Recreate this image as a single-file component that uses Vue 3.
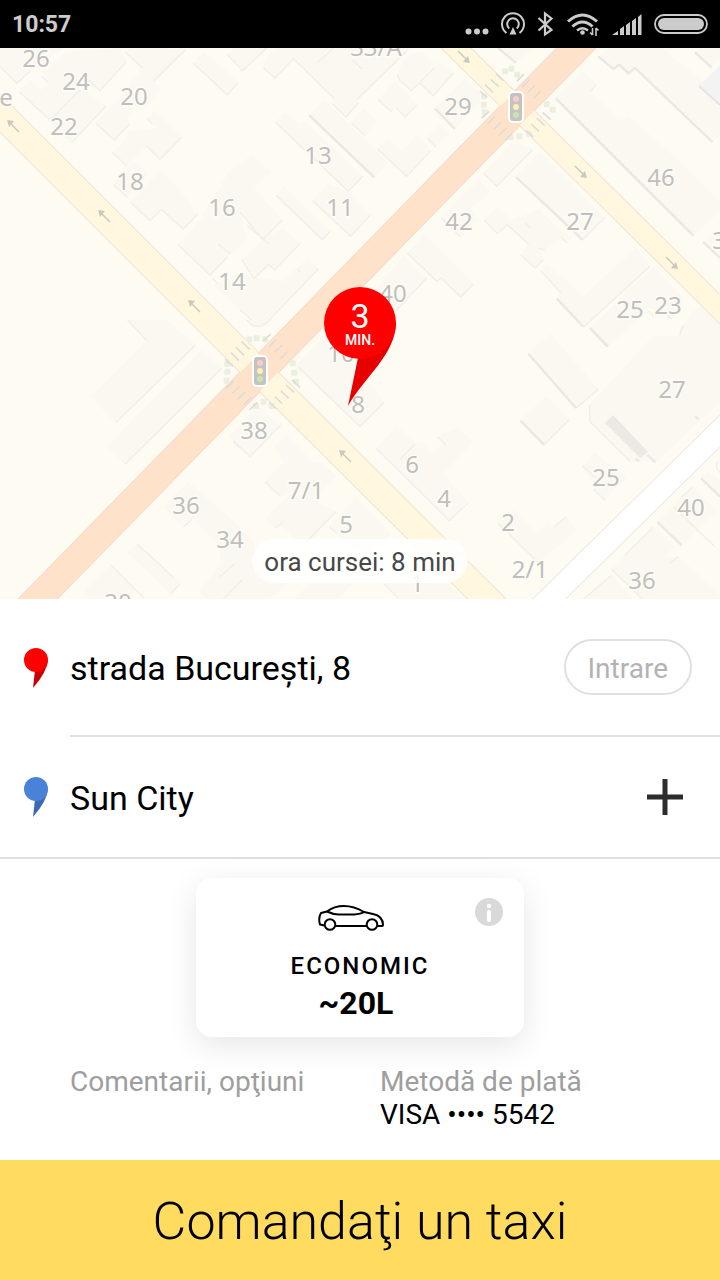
<script setup>
const tiles = [
  {
    x: 0, y: 0, w: 240, h: 300,
    buildings: [
      '0,195 0,144 190,144 130,185 50,250',
      '130,215 200,155 360,144 380,180 300,272 230,245 190,270 145,248',
      '58,272 90,242 125,270 230,170 260,240 155,360',
      '150,355 240,265 318,318 215,428 160,385',
      '375,155 390,144 480,144 428,205',
      '480,144 555,150 460,245 482,270 425,332 405,320 380,350 388,372 343,420 287,370 345,310 400,240',
      '440,355 465,332 545,410 480,478 440,438 380,498 337,457 370,430 385,395 430,390 475,385',
      '340,555 400,480 445,520 382,592',
      '390,605 480,512 538,570 593,642 550,688 485,628 450,662',
      '580,190 612,155 715,245 682,285',
      '680,160 700,144 720,144 720,205',
      '605,650 690,510 758,464 812,516 762,564 848,659 788,719 735,655',
      '535,735 605,655 720,640 740,720 690,762 655,730 683,770 630,825'
    ],
    shades: ['0,200 50,250 90,215', '125,228 145,248', '265,240 300,272 380,185', '58,275 150,360 240,270', '215,428 318,318', '375,155 428,205', '555,150 460,245', '287,370 343,420 388,372', '337,457 380,498', '440,438 480,478 545,412', '440,355 458,373', '340,553 382,592', '390,605 450,662 485,628 550,688 593,642', '580,190 682,285 714,248', '680,162 720,203', '535,735 630,825 683,770', '655,732 690,762', '637,835 692,890']
  },
  {
    x: 240, y: 48, w: 240, h: 300,
    buildings: [
      '0,0 80,0 8,68 0,65',
      '75,35 110,0 270,0 232,45 158,35 105,90 70,60',
      '158,30 232,45 280,0 510,0 350,155 355,165 318,207 280,168 283,150',
      '472,80 490,40 510,20 545,10 582,45 515,128 480,95',
      '540,105 595,45 640,75 580,143',
      '415,155 465,98 505,140 530,170 495,207 468,178 455,192',
      '585,180 675,92 720,130 720,160 645,243',
      '562,270 600,228 630,255 587,297',
      '334,223 370,180 413,222 375,263',
      '412,302 445,272 485,308 530,260 572,305 500,385',
      '208,200 252,155 445,345 403,388',
      '106,222 135,195 180,230 195,220 368,385 325,430',
      '108,442 130,415 270,550 248,575',
      '218,458 265,405 320,430 392,500 332,565',
      '5,635 70,575 130,540 182,585 105,665 85,650 42,692',
      '0,680 130,700 205,628 235,662 75,830 50,830 -80,710',
      '603,510 660,450 720,395 720,460 690,480 712,515 662,567',
      '502,615 552,560 700,708 662,747 603,690 590,700',
      '370,770 490,625 560,690 430,830'
    ],
    shades: ['0,65 8,68 80,0', '70,60 105,90 158,35', '158,30 283,152', '278,168 318,207 355,165', '280,0 232,45', '337,35 366,63', '500,10 350,155', '472,80 480,98 515,128 582,60', '540,105 580,143 640,75', '415,155 455,192', '468,178 495,207 530,172', '562,270 587,297', '334,225 375,263', '412,302 500,385 572,308', '106,222 325,430 368,385', '108,442 248,575 270,550', '218,458 332,565 392,500', '0,492 68,575 128,515', '22,533 88,588', '5,635 42,692 85,650 105,665 182,585', '0,785 50,830 75,830 235,662', '172,663 182,672', '603,510 662,567', '502,615 590,700 603,690 662,747 700,708', '560,690 430,830'],
    deep: ['585,182 645,243', '208,202 403,388']
  },
  {
    x: 480, y: 48, w: 240, h: 300,
    buildings: [
      '55,0 160,0 108,45',
      '355,25 385,0 545,0 720,140 720,260 695,283 465,60 445,78 418,50 400,65',
      '645,15 660,0 720,0 720,35 695,60',
      '228,150 310,70 348,110 332,130 420,220 445,205 615,355 720,460 720,490 640,563',
      '670,582 720,540 720,630',
      '10,375 100,280 158,300 50,415',
      '108,385 180,315 375,508 307,577',
      '12,515 55,475 95,515 180,485 212,520 275,570 262,585 243,568 195,608 178,600 190,635 165,660 122,620 145,588 82,530 52,557',
      '230,752 240,735 182,668 200,650 272,710 310,745 468,600 510,655 310,838',
      '330,840 522,655 610,755 575,815 510,780 385,897',
      '0,395 30,430 0,460'
    ],
    shades: ['10,375 50,415 158,305', '12,515 52,557 82,530 146,588', '135,525 152,541', '122,620 165,660 190,635', '175,600 196,607', '243,568 262,585', '182,668 243,735', '510,655 310,838', '505,790 522,806', '560,800 575,813', '348,110 332,130', '375,508 307,577', '605,835 600,860'],
    deep: ['55,0 108,45', '355,25 400,63 418,50 445,76 465,60 697,282', '645,13 695,59', '228,152 640,563', '670,582 720,630', '108,387 307,575', '230,752 310,836', '330,840 383,895']
  },
  {
    x: 0, y: 320, w: 240, h: 280,
    buildings: [
      '383,0 500,0 587,75 347,308 273,230 440,62',
      '320,380 605,90 665,145 375,433',
      '490,562 565,485 720,620 720,740 580,598 550,622',
      '380,695 412,672 540,790 512,822',
      '255,810 333,735 405,805 390,840 270,840',
      '600,815 670,718 720,740 720,840 620,840'
    ],
    shades: ['587,75 347,308', '665,145 375,433', '383,0 440,62', '550,622 577,597', '412,672 520,772', '333,735 432,835', '700,365 720,385', '512,822 540,792']
  },
  {
    x: 220, y: 320, w: 260, h: 280,
    buildings: [
      '225,140 330,30 492,248 420,320',
      '28,350 110,255 182,315 90,410',
      '135,485 195,425 162,380 200,345 285,430 310,430 348,470 270,540 240,510 180,530',
      '135,595 210,520 260,530 350,575 245,680 190,620 165,625',
      '328,620 410,532 512,640 460,700 400,690',
      '468,385 530,318 585,370 600,365 640,400 675,370 655,350 680,335 715,322 758,368 670,460 745,548 688,602',
      '0,570 100,660 130,780 200,790 150,840 0,840',
      '490,790 680,790 745,840 540,840',
      '220,840 270,790 400,790 350,840',
      '80,0 160,0 125,18 100,18'
    ],
    shades: ['235,140 420,320 492,248', '40,362 90,410 182,315', '135,485 180,528', '165,625 190,607', '348,575 245,680', '328,620 350,640', '468,385 688,602 745,548', '540,418 585,372', '652,350 677,374', '80,0 100,18 125,18 150,0', '490,790 540,840', '0,770 45,730', '10,838 65,780']
  },
  {
    x: 460, y: 320, w: 260, h: 280,
    buildings: [
      '205,100 272,42 415,208 348,265',
      '180,302 260,228 327,300 252,375',
      '388,255 580,48 660,48 670,15 700,-30 780,-60 780,245 590,425 512,425 390,305',
      '367,437 405,398 440,430 500,470 432,542',
      '115,610 160,570 230,640 265,608 282,622 318,590 353,630 235,728',
      '592,605 700,500 770,575 710,630 665,677',
      '722,475 740,455 780,480 780,530',
      '455,748 580,622 640,680 615,710 655,710 780,825 780,840 550,840',
      '370,840 455,765 520,840',
      '0,330 38,365 0,405',
      '0,520 25,548 5,565'
    ],
    shades: ['388,255 390,305 512,425', '367,437 408,475', '400,507 435,541', '115,610 235,728', '282,622 318,590', '348,265 415,208', '252,375 327,300', '640,560 765,680', '455,748 550,840', '580,622 495,705', '630,730 655,710', '370,838 455,765', '670,15 660,45', '665,530 697,502', '770,425 770,445 780,458', '350,2 370,20'],
    deep: ['205,101 348,264', '181,302 252,374', '390,24 443,80', '592,606 665,676', '723,475 780,530', '562,405 587,427', '527,415 538,425', '706,289 716,298']
  }
]

const labels = [
  ['26', 36, 59], ['24', 76, 82], ['20', 134, 97], ['22', 64, 127], ['e', 6, 98],
  ['18', 130, 182], ['16', 222, 208], ['14', 232, 282], ['13', 318, 156], ['11', 340, 208],
  ['33/A', 376, 48], ['29', 458, 107], ['42', 459, 222], ['40', 393, 294], ['10', 341, 354],
  ['8', 358, 405], ['46', 661, 178], ['27', 580, 222], ['25', 630, 310], ['23', 668, 306],
  ['3', 719, 241], ['27', 672, 390], ['25', 606, 478], ['40', 691, 508], ['36', 642, 581],
  ['38', 254, 431], ['36', 186, 506], ['34', 230, 540], ['7/1', 306, 491], ['5', 346, 525],
  ['6', 412, 465], ['4', 444, 499], ['2', 508, 523], ['2/1', 530, 570], ['1', 417, 584],
  ['30', 118, 603]
]

const arrows = [
  [13, 126, 0], [104, 216, 0], [194, 306, 0], [345, 456, 0],
  [464, 57, 180], [581, 172, 180], [672, 263, 180]
]

const crossings = [
  {
    x: 480, y: 48,
    stripes: 'M48 78l22 20M32 94l24 22M15 110l24 23M0 130l22 18M110 100l22-22M126 118l22-22M142 135l22-22M160 152l22-23M22 228l23-22M40 246l22-23M57 262l22-22M75 277l22-22M137 247l23 20M153 228l24 22M170 210l24 23M188 193l24 22M5 210l23-20',
    green: [[75, 70], [94, 62], [112, 80], [200, 168], [218, 185], [92, 268], [118, 265], [147, 258], [12, 145], [12, 170], [14, 192]]
  },
  {
    x: 220, y: 320,
    stripes: 'M65 65l24 24M48 82l24 24M33 98l24 24M15 117l24 22M130 62l22-20M147 80l23-22M163 97l24-22M180 117l23-22M18 205l24-23M35 222l24-24M53 238l24-23M70 255l24-23M88 270l24-23M148 247l22 20M165 230l22 22M182 212l24 23M198 195l24 22M216 180l24 22',
    green: [[88, 58], [110, 55], [135, 58], [218, 130], [223, 158], [228, 185], [22, 132], [22, 155], [20, 182], [108, 258], [130, 245], [155, 258]]
  }
]

const lights = [[516, 107], [260, 371]]
</script>

<template>
  <main class="app">
    <header class="status">
      <time class="clock">10:57</time>
      <svg class="status-icons" viewBox="464 8 246 32" fill="none" stroke="#ccc" aria-hidden="true">
        <g fill="#ccc" stroke="none">
          <circle cx="468.500" cy="31.500" r="3" /><circle cx="477" cy="31.500" r="3" /><circle cx="485.500" cy="31.500" r="3" />
          <path d="M513 27l3.500 7.500h-7z" />
        </g>
        <path d="M506.500 33a11 11 0 1 1 13 0" stroke-width="2" />
        <path d="M509.300 28.500a5.800 5.800 0 1 1 7.400 0" stroke-width="2" />
        <path d="M538.500 18l13 12-6.500 4.500v-21l6.500 5L538.500 30.500" stroke-width="2.200" />
        <g stroke-width="3">
          <path d="M568 21.500q14.500-13 29 0" />
          <path d="M572.500 26.500q10-9 20 0" />
          <path d="M577 30.500q5.500-4.500 11 0" stroke-width="2.500" />
        </g>
        <circle cx="582.500" cy="32.500" r="2.300" fill="#ccc" stroke="none" />
        <path d="M592.500 28v7M590 32.500l2.500 2.500M596 36v-8M596 28l2.500 2.500" stroke-width="1.600" />
        <path d="M612 35h6v-4zM620 35h4v-9l-4 3zM626 35h4V22l-4 3zM632 35h4V18l-4 3zM638 35h3.500V14l-3.500 3z" fill="#ccc" stroke="none" />
        <rect x="655" y="15" width="52" height="18" rx="9" stroke-width="1.800" />
        <rect x="658" y="18" width="46" height="12" rx="6" fill="#ccc" stroke="none" />
      </svg>
    </header>

    <section class="map" aria-label="Hartă">
      <svg class="map-canvas" viewBox="0 48 720 551" preserveAspectRatio="xMidYMid slice">
        <rect x="0" y="0" width="720" height="620" fill="#fefbf3" />
        <svg v-for="(t, i) in tiles" :key="i" class="tile" :x="t.x" :y="t.y" :width="t.w" :height="t.h" :viewBox="`0 0 ${t.w * 3} ${t.h * 3}`">
          <polygon v-for="p in t.buildings" :key="p" :points="p" fill="#fbf8f1" />
          <polyline v-for="p in t.shades" :key="p" :points="p" fill="none" stroke="#f0eee8" stroke-width="4" />
          <polyline v-for="p in t.deep" :key="p" :points="p" fill="none" stroke="#e9e8e2" stroke-width="7" />
        </svg>
        <polygon points="699,86 720,65 720,105" fill="#f3f3f3" />
        <path d="M699 86l21 19" stroke="#e4e4e2" stroke-width="2" />
        <polygon points="605,423 613,415 648,452 640,458" fill="#ebe9e3" />

        <g fill="none">
          <path d="M539 609L730 421" stroke="#ebe9e5" stroke-width="24" />
          <path d="M539 609L730 421" stroke="#fff" stroke-width="22" />
          <path d="M-10 103L260 373L500 612" stroke="#f8e0d0" stroke-width="28" />
          <path d="M446 38L730 319" stroke="#f8e0d0" stroke-width="22" />
          <path d="M28 609L586 38" stroke="#f6dac8" stroke-width="29" />
          <path d="M-10 103L260 373L500 612" stroke="#fff8df" stroke-width="26" />
          <path d="M446 38L730 319" stroke="#fff8df" stroke-width="20" />
          <path d="M28 609L586 38" stroke="#fee3ca" stroke-width="27" />
        </g>

        <svg v-for="c in crossings" :key="c.x" class="tile" :x="c.x" :y="c.y" width="240" height="300" viewBox="0 0 720 900">
          <rect v-for="g in c.green" :key="g.join()" :x="g[0] - 9" :y="g[1] - 9" width="18" height="18" rx="4" fill="#ebefe0" />
          <path :d="c.stripes" stroke="#dedcd8" stroke-width="5" fill="none" />
        </svg>

        <g v-for="a in arrows" :key="a.join()" :transform="`translate(${a[0]} ${a[1]}) rotate(${a[2]})`">
          <path d="M6 6L-3-3" stroke="#cbc9bf" stroke-width="1.500" />
          <path d="M-6-6L1-5L-4 1z" fill="#cbc9bf" />
        </g>

        <g class="numbers">
          <text v-for="(l, i) in labels" :key="i" :x="l[1]" :y="l[2] + 8">{{ l[0] }}</text>
        </g>

        <g v-for="p in lights" :key="p[0]" :transform="`translate(${p[0]} ${p[1]})`">
          <rect x="-7" y="-15" width="14" height="30" rx="4" fill="#c5c3c1" stroke="#fff" stroke-width="2" />
          <circle cy="-8" r="3" fill="#f9cdc8" />
          <circle cy="0" r="3" fill="#fbeeb4" />
          <circle cy="8" r="3" fill="#c6e5b0" />
        </g>
      </svg>

      <div class="pickup">
        <svg class="pickup-shape" viewBox="0 0 72 120" aria-hidden="true">
          <path d="M35 66L24 119C42 88 71 68 72 36z" fill="#e60000" />
          <circle cx="36" cy="36" r="36" fill="#f00" />
        </svg>
        <div class="pickup-text">
          <span class="pickup-value">3</span>
          <span class="pickup-unit">MIN.</span>
        </div>
      </div>
      <div class="ride-time">ora cursei: 8 min</div>
    </section>

    <section class="route">
      <div class="stop first">
        <svg class="stop-pin" viewBox="0 0 24 40" aria-hidden="true">
          <path d="M11 22L9 40Q23 24 24 12z" fill="#c80000" />
          <circle cx="12" cy="12" r="12" fill="#f00" />
        </svg>
        <div class="stop-body lined">
          <span class="address">strada București, 8</span>
          <button class="entrance" type="button">Intrare</button>
        </div>
      </div>
      <div class="stop">
        <svg class="stop-pin" viewBox="0 0 24 40" aria-hidden="true">
          <path d="M11 22L9 40Q23 24 24 12z" fill="#3b6ab0" />
          <circle cx="12" cy="12" r="12" fill="#4a82da" />
        </svg>
        <div class="stop-body">
          <span class="address">Sun City</span>
          <button class="add" type="button" aria-label="Adaugă">
            <svg viewBox="0 0 36 36" aria-hidden="true"><path d="M18 0v36M0 18h36" stroke="#2d2d2d" stroke-width="5" /></svg>
          </button>
        </div>
      </div>
    </section>

    <section class="tariffs">
      <article class="tariff">
        <button class="info" type="button" aria-label="Informații">
          <svg viewBox="0 0 28 28" aria-hidden="true">
            <circle cx="14" cy="14" r="14" fill="#d9d9d9" />
            <circle cx="14" cy="8" r="2.200" fill="#fff" />
            <path d="M14 14v8" stroke="#fff" stroke-width="4" stroke-linecap="round" />
          </svg>
        </button>
        <svg class="car" viewBox="0 0 66 26" fill="none" stroke="#000" stroke-width="2" stroke-linejoin="round" aria-hidden="true">
          <path d="M6.500 20.500L2 19.500Q0 13 3 8L9 6.500Q16 1 26 1Q36 1 46 7L55 9Q65 11 65 20Q65 21 64 21H59.500M17.500 21H48.500" />
          <path d="M9 6.500Q15 9.500 21 9.500H36Q43 9 46 7" />
          <circle cx="12" cy="19.500" r="5.300" /><circle cx="54" cy="19.500" r="5.300" />
        </svg>
        <h2 class="tariff-name">ECONOMIC</h2>
        <p class="price">~20L</p>
      </article>
    </section>

    <section class="options">
      <a class="option" href="#comentarii"><span class="option-label">Comentarii, opţiuni</span></a>
      <a class="option" href="#plata">
        <span class="option-label">Metodă de plată</span>
        <span class="option-value">VISA •••• 5542</span>
      </a>
    </section>

    <button class="order" type="button">Comandaţi un taxi</button>
  </main>
</template>

<style>
body { margin: 0; background: #fff; }
</style>

<style scoped>
.app {
  display: flex;
  flex-direction: column;
  min-height: 100vh;
  background: #fff;
  color: #000;
  font-family: Roboto, "Liberation Sans", sans-serif;
}
.app * { box-sizing: border-box; }
button {
  padding: 0;
  border: 0;
  background: none;
  font: inherit;
  cursor: pointer;
}
.status {
  display: flex;
  align-items: center;
  justify-content: space-between;
  height: 48px;
  padding: 0 10px 0 12px;
  background: #000;
}
.clock { padding-top: 2px; color: #ccc; font-size: 23px; font-weight: 700; line-height: 28px; }
.status-icons { width: 246px; height: 32px; }
.map {
  position: relative;
  flex: 1 0 551px;
  overflow: hidden;
}
.map-canvas { position: absolute; width: 100%; height: 100%; }
.tile { overflow: visible; }
.numbers text {
  fill: #c0bfbb;
  stroke: #fefcf7;
  stroke-width: 3px;
  paint-order: stroke;
  font-family: "Noto Sans", "Open Sans", sans-serif;
  font-size: 24px;
  text-anchor: middle;
}
.pickup {
  position: absolute;
  top: 239px;
  left: 50%;
  width: 72px;
  height: 120px;
  margin-left: -36px;
}
.pickup-shape { position: absolute; width: 72px; height: 120px; }
.pickup-text {
  position: relative;
  display: flex;
  flex-direction: column;
  align-items: center;
  padding-top: 12px;
  color: #fff;
}
.pickup-value { font-size: 34px; line-height: 34px; }
.pickup-unit { font-size: 14px; font-weight: 500; line-height: 14px; }
.ride-time {
  position: absolute;
  bottom: 16px;
  left: 50%;
  transform: translateX(-50%);
  padding: 2px 12px 0;
  border-radius: 22px;
  background: rgba(255, 255, 255, .85);
  color: #484848;
  font-size: 26px;
  line-height: 42px;
  white-space: nowrap;
}
.route { border-bottom: 2px solid #e0e0e0; }
.stop {
  display: flex;
  align-items: center;
  gap: 22px;
  height: 120px;
  padding-left: 24px;
}
.stop.first { height: 138px; }
.stop-pin { flex: none; width: 24px; height: 40px; }
.stop-body {
  display: flex;
  flex: 1;
  align-items: center;
  justify-content: space-between;
  align-self: stretch;
  padding-right: 28px;
}
.stop-body.lined { border-bottom: 2px solid #e0e0e0; }
.address { padding-top: 2px; font-size: 34px; line-height: 40px; }
.entrance {
  height: 56px;
  padding: 2px 22px 0;
  border: 2px solid #e0e0e0;
  border-radius: 28px;
  color: #b3b3b3;
  font-size: 28px;
}
.add { width: 54px; height: 54px; display: grid; place-items: center; }
.add svg { width: 36px; height: 36px; }
.tariffs { display: flex; justify-content: center; padding: 19px 0 28px; }
.tariff {
  position: relative;
  display: flex;
  flex-direction: column;
  align-items: center;
  width: 328px;
  padding: 27px 0 16px;
  border-radius: 16px;
  background: #fff;
  box-shadow: 0 8px 32px rgba(0, 0, 0, .1);
}
.info { position: absolute; top: 20px; right: 21px; width: 28px; height: 28px; }
.info svg { display: block; }
.car { width: 66px; height: 26px; margin-left: -18px; }
.tariff-name {
  margin: 21px 0 5px;
  font-size: 24px;
  font-weight: 500;
  line-height: 28px;
  letter-spacing: 2px;
}
.price { margin: 0; padding-right: 8px; font-size: 32px; font-weight: 700; line-height: 36px; }
.options {
  display: grid;
  grid-template-columns: 1fr 1fr;
  padding: 0 30px 29px 70px;
}
.option {
  display: flex;
  flex-direction: column;
  color: #000;
  font-size: 28px;
  line-height: 33px;
  text-decoration: none;
}
.option-label { color: #9e9e9e; }
.order {
  height: 120px;
  padding-top: 4px;
  background: #ffdc60;
  color: #000;
  font-size: 52px;
  font-weight: 300;
  line-height: 60px;
}
</style>
